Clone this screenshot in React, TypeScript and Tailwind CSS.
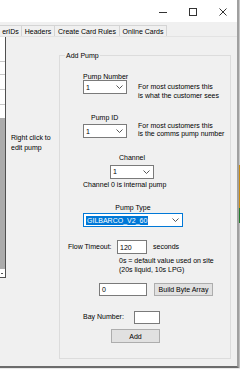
import React from "react";

function Chevron() {
  return (
    <svg width="7" height="4" viewBox="0 0 7 4" className="shrink-0">
      <path d="M0.5 0.5 L3.5 3.5 L6.5 0.5" fill="none" stroke="#444" strokeWidth="0.9" />
    </svg>
  );
}

function Combo({ value, className, focused }: { value: string; className: string; focused?: boolean }) {
  return (
    <div
      className={
        "flex h-[14px] items-center justify-between bg-white border pl-[2px] pr-[3px] " +
        (focused ? "border-[#0078d7] " : "border-[#7a7a7a] ") +
        className
      }
    >
      {focused ? (
        <span className="bg-[#0078d7] text-white leading-[9px] px-[1px]">{value}</span>
      ) : (
        <span className="leading-[9px]">{value}</span>
      )}
      <Chevron />
    </div>
  );
}

function TextBox({ value, className }: { value?: string; className: string }) {
  return (
    <div className={"flex items-center bg-white border border-[#7a7a7a] pl-[2px] leading-[9px] " + className}>
      {value}
    </div>
  );
}

function WinButton({ label, className }: { label: string; className: string }) {
  return (
    <div className={"flex items-center justify-center bg-[#e1e1e1] border border-[#adadad] leading-[9px] " + className}>
      {label}
    </div>
  );
}

const tabs = [
  { label: "erIDs", w: "w-[22px]" },
  { label: "Headers", w: "w-[33px]" },
  { label: "Create Card Rules", w: "w-[65px]" },
  { label: "Online Cards", w: "w-[47px]" },
];

export default function App() {
  return (
    <div className="w-[240px] h-[369px] overflow-hidden bg-[#e8e8e8] text-[7px] text-black font-['Liberation_Sans',Arial,sans-serif]">
      <div className="flex h-[368px]">
        <div className="w-[239px] h-[368px] flex flex-col border-r-2 border-b-2 border-r-[#a0a0a0] border-b-[#6c6c6c]">
          {/* title bar */}
          <div className="h-[22px] bg-white flex justify-end shrink-0">
            <div className="w-[30px] flex items-center justify-center pt-[2px]">
              <svg width="8" height="8" viewBox="0 0 8 8">
                <path d="M0 4.5 H8" stroke="#333" strokeWidth="1" />
              </svg>
            </div>
            <div className="w-[30px] flex items-center justify-center pt-[2px]">
              <svg width="8" height="8" viewBox="0 0 8 8">
                <rect x="0.5" y="0.5" width="7" height="7" fill="none" stroke="#333" strokeWidth="1" />
              </svg>
            </div>
            <div className="w-[29px] flex items-center justify-center pt-[2px]">
              <svg width="8" height="8" viewBox="0 0 8 8">
                <path d="M0.5 0.5 L7.5 7.5 M7.5 0.5 L0.5 7.5" stroke="#333" strokeWidth="1" />
              </svg>
            </div>
          </div>

          {/* tab strip */}
          <div className="h-[15px] bg-[#f0f0f0] flex items-end shrink-0 border-b border-[#e3e3e3]">
            {tabs.map((t) => (
              <div
                key={t.label}
                className={"h-[11px] border-t border-r border-[#d4d4d4] bg-[#f0f0f0] text-center leading-[11px] whitespace-nowrap overflow-hidden " + t.w}
              >
                {t.label}
              </div>
            ))}
          </div>

          {/* tab page */}
          <div className="flex-1 bg-[#f0f0f0] flex items-start">
            {/* pump list */}
            <div className="w-[6px] flex flex-col border-r border-b border-[#505050]">
              <div className="h-[25px] bg-white border-b border-[#c8c8c8]" />
              <div className="h-[13px] bg-white border-b border-[#c8c8c8]" />
              <div className="h-[15px] bg-white border-b border-[#c8c8c8]" />
              <div className="h-[15px] bg-white border-b border-[#c8c8c8]" />
              <div className="h-[13px] bg-white" />
              <div className="h-[151px] bg-[#ababab]" />
              <div className="h-[8px] bg-white flex items-center">
                <div className="w-[2px] h-[1px] bg-[#555] ml-[1px]" />
              </div>
            </div>

            <div className="w-[53px] pl-[5px] mt-[96px] leading-[10px]">
              Right click to
              <br />
              edit pump
            </div>

            <fieldset className="mt-[14px] w-[172px] h-[308px] border border-[#dcdcdc]">
              <legend className="ml-[5px] px-[1px] leading-[9px]">Add Pump</legend>
              <div className="flex flex-col">
                <div className="mt-[13px] ml-[23px] flex items-start">
                  <div className="w-[44px] flex flex-col">
                    <div className="h-[7px] leading-[7px] whitespace-nowrap">Pump Number</div>
                    <Combo value="1" className="w-[44px]" />
                  </div>
                  <div className="ml-[11px] mt-[10px] leading-[8.5px] whitespace-nowrap">
                    For most customers this
                    <br />
                    is what the customer sees
                  </div>
                </div>

                <div className="mt-[14px] ml-[23px] flex items-start">
                  <div className="w-[44px] flex flex-col">
                    <div className="h-[7px] leading-[7px] ml-[8px] whitespace-nowrap">Pump ID</div>
                    <Combo value="1" className="w-[44px] mt-[3px]" />
                  </div>
                  <div className="ml-[11px] mt-[7.5px] leading-[8.5px] whitespace-nowrap">
                    For most customers this
                    <br />
                    is the comms pump number
                  </div>
                </div>

                <div className="mt-[15px] ml-[50px] w-[44px] flex flex-col">
                  <div className="h-[7px] leading-[7px] text-center">Channel</div>
                  <Combo value="1" className="w-[44px] mt-[4px]" />
                </div>
                <div className="mt-[2px] ml-[23px] leading-[8.5px]">Channel 0 is internal pump</div>

                <div className="mt-[14.5px] ml-[23px] w-[100px] flex flex-col">
                  <div className="h-[7px] leading-[7px] text-center">Pump Type</div>
                  <Combo value="GILBARCO_V2_60" focused className="w-[100px] mt-[2.5px]" />
                </div>

                <div className="mt-[13px] ml-[8px] flex items-center h-[14px]">
                  <div className="w-[49px] whitespace-nowrap">Flow Timeout:</div>
                  <TextBox value="120" className="w-[30px] h-[14px]" />
                  <div className="ml-[6px]">seconds</div>
                </div>
                <div className="mt-[3px] ml-[59px] leading-[8.5px] whitespace-nowrap">
                  0s = default value used on site
                  <br />
                  (20s liquid, 10s LPG)
                </div>

                <div className="mt-[9px] ml-[39px] flex">
                  <TextBox value="0" className="w-[48px] h-[13px]" />
                  <WinButton label="Build Byte Array" className="ml-[7px] w-[59px] h-[13px]" />
                </div>

                <div className="mt-[15px] ml-[23px] flex items-center h-[13px]">
                  <div className="w-[51px] whitespace-nowrap">Bay Number:</div>
                  <TextBox className="w-[26px] h-[13px]" />
                </div>

                <WinButton label="Add" className="mt-[5px] ml-[51px] w-[49px] h-[14px]" />
              </div>
            </fieldset>
          </div>
        </div>

        {/* window behind */}
        <div className="w-[1px] flex flex-col">
          <div className="h-[165px] bg-[#c8c8c8]" />
          <div className="h-[43px] bg-[#c98a10]" />
          <div className="h-[15px] bg-[#237a2a]" />
          <div className="flex-1 bg-[#bdbdbd]" />
        </div>
      </div>
    </div>
  );
}
